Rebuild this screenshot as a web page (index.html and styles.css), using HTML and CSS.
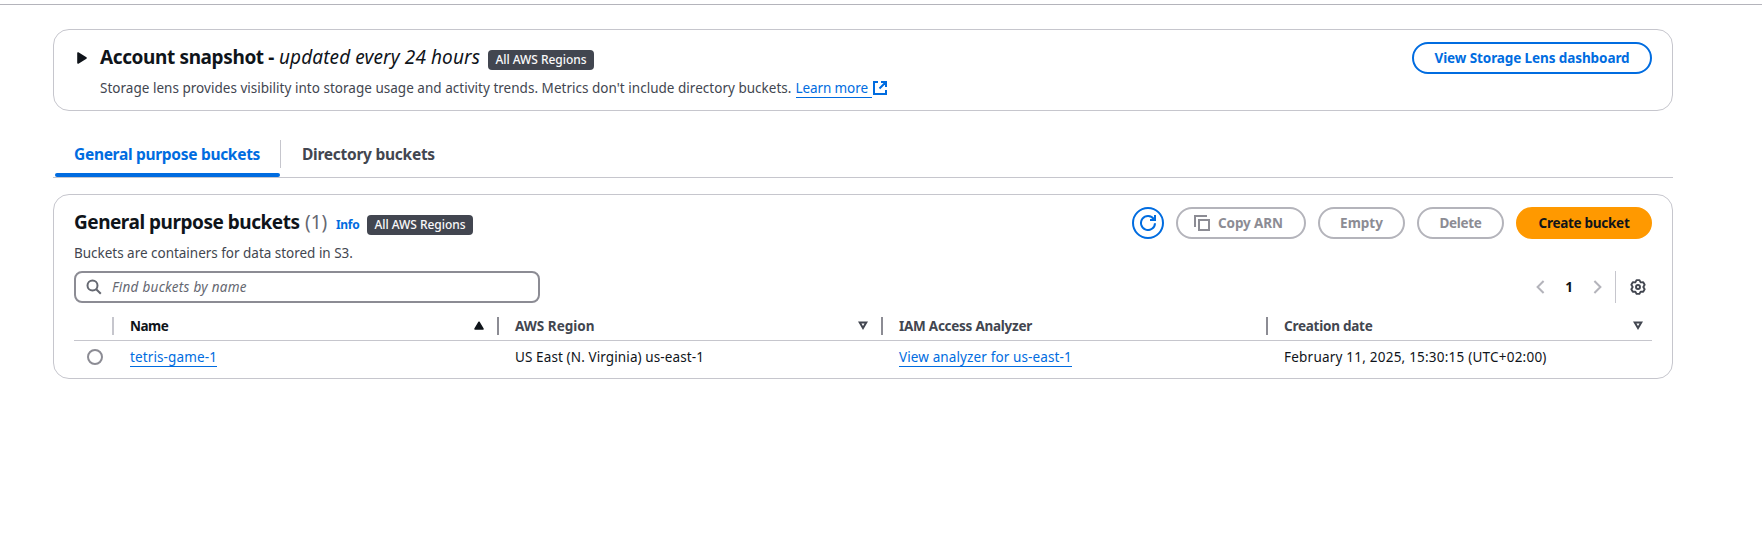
FILE: index.html
```
<!DOCTYPE html>
<html lang="en">
<head>
<meta charset="utf-8">
<title>General purpose buckets</title>
<link rel="stylesheet" href="styles.css">
</head>
<body>
<div class="top-line"></div>
<main class="page">
  <section class="card snapshot">
    <svg class="expand" width="10" height="12" viewBox="0 0 10 12"><path d="M1 1v10l8-5z" fill="#0f141a" stroke="#0f141a" stroke-width="1.6" stroke-linejoin="round"/></svg>
    <div class="card-copy">
      <h2 class="title"><span class="title-snapshot">Account snapshot -</span><em class="title-note">updated every 24 hours</em><span class="badge">All AWS Regions</span></h2>
      <p class="description"><span class="lens-copy">Storage lens provides visibility into storage usage and activity trends. Metrics don't include directory buckets.</span><a class="link learn">Learn more</a><svg class="external" width="14" height="14" viewBox="0 0 14 14" fill="none" stroke="#006ce0" stroke-width="2"><path d="M5 1H1v12h12V9M8 1h5v5M13 1L6.5 7.5"/></svg></p>
    </div>
    <button class="button lens">View Storage Lens dashboard</button>
  </section>

  <nav class="tabs">
    <a class="tab active">General purpose buckets</a>
    <a class="tab second">Directory buckets</a>
  </nav>

  <section class="card buckets">
    <header class="bucket-header">
      <div class="card-copy">
        <h2 class="title"><span class="title-buckets">General purpose buckets</span><span class="count">(1)</span><a class="info">Info</a><span class="badge">All AWS Regions</span></h2>
        <p class="description containers">Buckets are containers for data stored in S3.</p>
      </div>
      <div class="actions">
        <button class="button refresh" aria-label="Refresh"><svg width="16" height="16" viewBox="0 0 16 16" fill="none" stroke="#006ce0" stroke-width="2"><path d="M15 8.2A7 7 0 1 1 13.8 4.1L14.4 5M15 0v5H10"/></svg></button>
        <button class="button disabled copy"><svg width="16" height="16" viewBox="0 0 16 16" fill="none" stroke="#8c8c94" stroke-width="2"><path d="M5 5h10v10H5zM1 12V1h12"/></svg><span>Copy ARN</span></button>
        <button class="button disabled empty">Empty</button>
        <button class="button disabled delete">Delete</button>
        <button class="button primary">Create bucket</button>
      </div>
    </header>

    <div class="tools">
      <div class="search">
        <svg width="16" height="16" viewBox="0 0 16 16" fill="none" stroke="#656871" stroke-width="2"><circle cx="6.5" cy="6.5" r="5"/><path d="M10.2 10.2l4.6 4.6"/></svg>
        <span class="placeholder">Find buckets by name</span>
      </div>
      <div class="pagination">
        <svg width="9" height="14" viewBox="0 0 9 14" fill="none" stroke="#b4b4bb" stroke-width="2"><path d="M7.6 1L1.6 7l6 6"/></svg>
        <span class="page-number">1</span>
        <svg width="9" height="14" viewBox="0 0 9 14" fill="none" stroke="#b4b4bb" stroke-width="2"><path d="M1.4 1l6 6-6 6"/></svg>
        <span class="tool-divider"></span>
        <svg class="gear" width="16" height="16" viewBox="0 0 16 16" fill="none" stroke="#424650" stroke-width="1.9" stroke-linejoin="round"><path d="M6.54 1.15H9.46L10.65 3.41 13.2 3.32 14.66 5.84 13.3 8 14.66 10.16 13.2 12.68 10.65 12.59 9.46 14.85H6.54L5.35 12.59 2.8 12.68 1.34 10.16 2.7 8 1.34 5.84 2.8 3.32 5.35 3.41z"/><circle cx="8" cy="8" r="2"/></svg>
      </div>
    </div>

    <div class="table">
      <div class="row head">
        <div class="cell select"></div>
        <div class="cell sorted"><span class="h-name">Name</span><svg width="10" height="9" viewBox="0 0 10 9"><path d="M5 1.2L9 8H1z" fill="#0f141a" stroke="#0f141a" stroke-width="1.5" stroke-linejoin="round"/></svg></div>
        <div class="cell"><span>AWS Region</span><svg width="10" height="9" viewBox="0 0 10 9"><path d="M1.7 1.5h6.6L5 7z" fill="none" stroke="#424650" stroke-width="2"/></svg></div>
        <div class="cell iam"><span class="h-iam">IAM Access Analyzer</span></div>
        <div class="cell last"><span class="h-date">Creation date</span><svg width="10" height="9" viewBox="0 0 10 9"><path d="M1.7 1.5h6.6L5 7z" fill="none" stroke="#424650" stroke-width="2"/></svg></div>
      </div>
      <div class="row">
        <div class="cell select"><span class="radio"></span></div>
        <div class="cell"><a class="link">tetris-game-1</a></div>
        <div class="cell"><span class="region">US East (N. Virginia) us-east-1</span></div>
        <div class="cell"><a class="link">View analyzer for us-east-1</a></div>
        <div class="cell"><span class="date">February 11, 2025, 15:30:15 (UTC+02:00)</span></div>
      </div>
    </div>
  </section>
</main>
</body>
</html>
```
FILE: styles.css
```
* { box-sizing: border-box; }
body {
  margin: 0;
  background: #fff;
  color: #0f141a;
  font: 400 13.5px/20px "Noto Sans", "Open Sans", sans-serif;
  white-space: nowrap;
}
h2, p { margin: 0; }
svg { display: block; flex: none; }

.top-line { height: 5px; border-bottom: 1px solid #b4b4bb; }
.page { width: 1620px; margin: 24px 0 0 53px; }
.card { border: 1px solid #c6c6cd; border-radius: 16px; padding: 12px 20px; }
.card-copy { padding-top: 2px; }

.title {
  display: flex;
  align-items: center;
  height: 26px;
  font-size: 19px;
  line-height: 26px;
}
.title-snapshot { width: 179px; letter-spacing: -0.379px; }
.title-note { width: 209px; font-weight: 400; letter-spacing: 0.104px; }
.title-buckets { width: 231px; letter-spacing: -0.48px; }
.count { width: 31px; color: #656871; font-weight: 400; }
.info {
  width: 31px;
  margin-top: 6px;
  color: #006ce0;
  font-size: 12px;
  letter-spacing: -0.3px;
}
.badge {
  width: 106px;
  height: 20px;
  margin-top: 6px;
  border-radius: 4px;
  background: #424650;
  color: #f9f9fa;
  font-size: 12px;
  font-weight: 500;
  line-height: 20px;
  letter-spacing: -0.05px;
  text-align: center;
}
.description { display: flex; height: 20px; margin-top: 8px; color: #424650; }
.lens-copy { letter-spacing: 0.022px; }
.containers { letter-spacing: -0.02px; }

.link {
  align-self: center;
  height: 19px;
  border-bottom: 1px solid #006ce0;
  color: #006ce0;
  line-height: 18px;
  letter-spacing: 0.12px;
}
.learn { width: 76px; margin-left: 4px; letter-spacing: -0.1px; }
.external { margin: 3px 0 0 1px; }

.snapshot { display: flex; height: 82px; }
.expand { margin: 10px 13px 0 3px; }
.snapshot .button { margin-left: auto; }

.button {
  display: flex;
  align-items: center;
  justify-content: center;
  height: 32px;
  padding: 0;
  border: 2px solid #006ce0;
  border-radius: 16px;
  background: #fff;
  color: #006ce0;
  font: 700 13.5px/20px "Noto Sans", "Open Sans", sans-serif;
}
.lens { width: 240px; letter-spacing: -0.094px; }
.refresh { width: 32px; }
.disabled { border-color: #b4b4bb; color: #8c8c94; }
.copy {
  width: 130px;
  justify-content: flex-start;
  gap: 8px;
  padding-left: 16px;
  letter-spacing: -0.096px;
}
.empty { width: 87px; }
.delete { width: 87px; letter-spacing: -0.3px; }
.primary {
  width: 136px;
  border-color: #ff9900;
  background: #ff9900;
  color: #0f141a;
  letter-spacing: -0.275px;
}

.tabs {
  display: flex;
  height: 50px;
  margin-top: 17px;
  padding-left: 2px;
  border-bottom: 1px solid #c6c6cd;
}
.tab {
  position: relative;
  padding-top: 14px;
  color: #424650;
  font-size: 15.5px;
  font-weight: 700;
  line-height: 24px;
  letter-spacing: -0.3px;
}
.active { width: 225px; padding-left: 19px; color: #006ce0; }
.active::after {
  content: "";
  position: absolute;
  left: 0;
  right: 0;
  bottom: 0;
  height: 4px;
  border-radius: 2px;
  background: #006ce0;
}
.second { padding-left: 22px; letter-spacing: -0.26px; }
.second::before {
  content: "";
  position: absolute;
  left: 0;
  top: 12px;
  width: 1px;
  height: 28px;
  background: #c6c6cd;
}

.buckets { height: 185px; margin-top: 16px; }
.bucket-header { display: flex; justify-content: space-between; height: 56px; }
.actions { display: flex; gap: 12px; height: 32px; }

.tools { display: flex; justify-content: space-between; height: 32px; margin-top: 8px; }
.search {
  display: flex;
  align-items: center;
  gap: 10px;
  width: 466px;
  padding-left: 10px;
  border: 2px solid #8c8c94;
  border-radius: 8px;
}
.placeholder { color: #656871; font-style: italic; letter-spacing: 0.28px; }
.pagination { display: flex; align-items: center; padding-right: 6px; }
.page-number { width: 48px; text-align: center; font-weight: 700; }
.tool-divider { width: 1px; height: 32px; margin: 0 14px 0 13px; background: #c6c6cd; }

.table { margin-top: 7px; }
.row {
  display: grid;
  grid-template-columns: 38px 385px 384px 385px 386px;
  height: 32px;
}
.head {
  height: 31px;
  border-bottom: 1px solid #c6c6cd;
  color: #424650;
  font-weight: 700;
}
.cell { display: flex; align-items: center; padding-left: 18px; }
.head .cell {
  position: relative;
  justify-content: space-between;
  padding: 1px 13px 0 18px;
}
.head .cell + .cell::before {
  content: "";
  position: absolute;
  left: 0;
  top: 7px;
  width: 2px;
  height: 18px;
  background: #8c8c94;
}
.head .cell.sorted::before { background: #c6c6cd; }
.head .cell.last { padding-right: 9px; }
.sorted { color: #0f141a; }
.row .select { padding-left: 13px; }
.radio { width: 16px; height: 16px; border: 2px solid #8c8c94; border-radius: 50%; }
.h-name { letter-spacing: -0.5px; }
.h-iam { letter-spacing: -0.259px; }
.h-date { letter-spacing: -0.25px; }
.region { letter-spacing: 0.11px; }
.date { letter-spacing: 0.22px; }
```
